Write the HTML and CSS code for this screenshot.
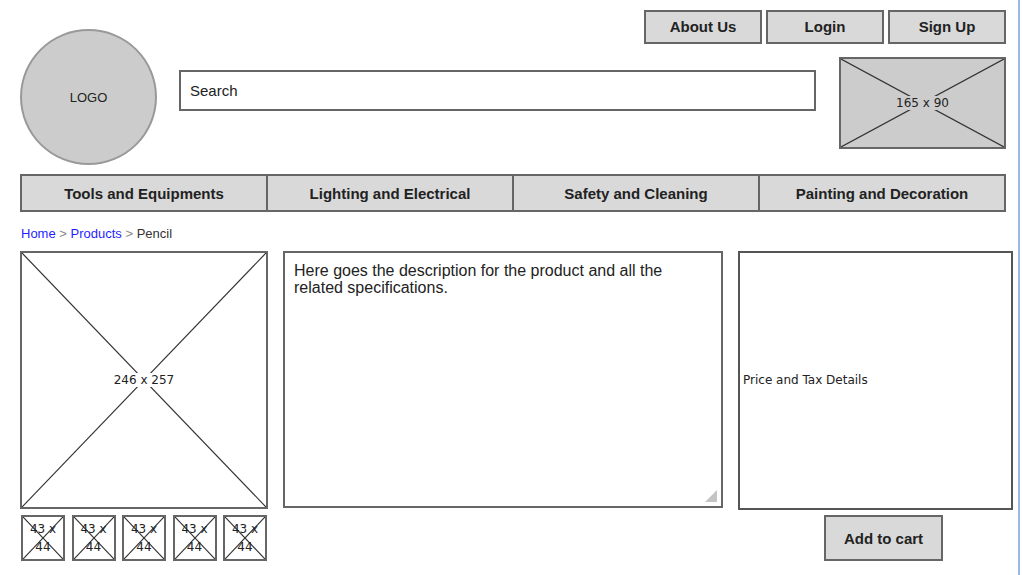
FILE: index.html
```html
<!DOCTYPE html>
<html lang="en">
<head>
  <meta charset="UTF-8">
  <title>Product - Pencil</title>
  <link rel="stylesheet" href="styles.css">
</head>
<body>
  <div class="page">
    <header class="header">
      <div class="logo">LOGO</div>
      <nav class="toplinks">
        <a href="#">About Us</a>
        <a href="#">Login</a>
        <a href="#">Sign Up</a>
      </nav>
      <div class="search">Search</div>
      <div class="ph banner">
        <svg viewBox="0 0 100 100" preserveAspectRatio="none"><line x1="0" y1="0" x2="100" y2="100"/><line x1="100" y1="0" x2="0" y2="100"/></svg>
        <span>165 x 90</span>
      </div>
    </header>

    <div class="menu">
      <a href="#">Tools and Equipments</a>
      <a href="#">Lighting and Electrical</a>
      <a href="#">Safety and Cleaning</a>
      <a href="#">Painting and Decoration</a>
    </div>

    <div class="crumbs">
      <a href="#">Home</a> <span class="sep">&gt;</span> <a href="#">Products</a> <span class="sep">&gt;</span> <span class="here">Pencil</span>
    </div>

    <section class="product">
      <div class="ph photo">
        <svg viewBox="0 0 100 100" preserveAspectRatio="none"><line x1="0" y1="0" x2="100" y2="100"/><line x1="100" y1="0" x2="0" y2="100"/></svg>
        <span>246 x 257</span>
      </div>
      <div class="desc">
        <p>Here goes the description for the product and all the related specifications.</p>
        <i class="grip"></i>
      </div>
      <div class="price">Price and Tax Details</div>

      <div class="thumbs">
        <div class="ph thumb"><svg viewBox="0 0 100 100" preserveAspectRatio="none"><line x1="0" y1="0" x2="100" y2="100"/><line x1="100" y1="0" x2="0" y2="100"/></svg><span>43 x 44</span></div>
        <div class="ph thumb"><svg viewBox="0 0 100 100" preserveAspectRatio="none"><line x1="0" y1="0" x2="100" y2="100"/><line x1="100" y1="0" x2="0" y2="100"/></svg><span>43 x 44</span></div>
        <div class="ph thumb"><svg viewBox="0 0 100 100" preserveAspectRatio="none"><line x1="0" y1="0" x2="100" y2="100"/><line x1="100" y1="0" x2="0" y2="100"/></svg><span>43 x 44</span></div>
        <div class="ph thumb"><svg viewBox="0 0 100 100" preserveAspectRatio="none"><line x1="0" y1="0" x2="100" y2="100"/><line x1="100" y1="0" x2="0" y2="100"/></svg><span>43 x 44</span></div>
        <div class="ph thumb"><svg viewBox="0 0 100 100" preserveAspectRatio="none"><line x1="0" y1="0" x2="100" y2="100"/><line x1="100" y1="0" x2="0" y2="100"/></svg><span>43 x 44</span></div>
      </div>
      <button class="cart">Add to cart</button>
    </section>
  </div>
</body>
</html>
```

FILE: styles.css
```css
* { box-sizing: border-box; margin: 0; padding: 0; }
body {
  font-family: 'Liberation Sans', Arial, sans-serif;
  background: #fff;
  color: #222;
}
.page {
  width: 1020px;
  min-height: 100vh;
  padding: 10px 0 0 20px;
  border-right: 2px solid #9ab9e2;
}
a { text-decoration: none; color: inherit; }

/* header */
.header {
  display: grid;
  width: 986px;
  grid-template-columns: 137px 637px 1fr;
  grid-template-rows: 34px auto;
  column-gap: 22px;
}
.logo {
  grid-column: 1;
  grid-row: 1 / 3;
  margin-top: 19px;
  width: 137px;
  height: 136px;
  border-radius: 50%;
  background: #cccccc;
  border: 2px solid #999;
  display: flex;
  align-items: center;
  justify-content: center;
  font-size: 13px;
  color: #222;
}
.toplinks {
  grid-column: 2 / 4;
  grid-row: 1;
  display: flex;
  justify-content: flex-end;
  gap: 4px;
}
.toplinks a,
.cart {
  width: 118px;
  height: 34px;
  border: 2px solid #666;
  background: #d9d9d9;
  display: flex;
  align-items: center;
  justify-content: center;
  font-weight: bold;
  font-size: 15px;
  color: #222;
}
.toplinks a { padding-bottom: 2px; }
.search {
  grid-column: 2;
  grid-row: 2;
  margin-top: 26px;
  height: 41px;
  border: 2px solid #666;
  padding-left: 9px;
  display: flex;
  align-items: center;
  font-size: 15px;
  color: #222;
}

/* image placeholders */
.ph {
  position: relative;
  border: 2px solid #666;
  display: flex;
  align-items: center;
  justify-content: center;
  font-family: 'DejaVu Sans', sans-serif;
  font-size: 12px;
  color: #222;
}
.ph svg {
  position: absolute;
  top: 0; left: 0;
  width: 100%;
  height: 100%;
}
.ph line { stroke: #333; stroke-width: 1.2; vector-effect: non-scaling-stroke; }
.ph span { position: relative; padding: 0 2px; background: #fff; }
.banner {
  grid-column: 3;
  grid-row: 2;
  margin-left: 1px;
  margin-top: 13px;
  height: 92px;
  background: #cccccc;
}
.banner span { background: #cccccc; }

/* category menu */
.menu {
  display: flex;
  width: 986px;
  height: 38px;
  margin-top: 9px;
  border: 2px solid #666;
  background: #d9d9d9;
}
.menu a {
  flex: 1;
  display: flex;
  align-items: center;
  justify-content: center;
  font-weight: bold;
  font-size: 15px;
  color: #222;
}
.menu a + a { border-left: 2px solid #666; }

.crumbs {
  margin: 14px 0 9px 1px;
  font-size: 13px;
  line-height: 16px;
}
.crumbs a { color: #1f1fff; }
.crumbs .sep { color: #888; }
.crumbs .here { color: #333; }

/* product area */
.product {
  display: grid;
  grid-template-columns: 248px 440px 275px;
  grid-template-rows: 259px auto;
  column-gap: 15px;
  row-gap: 5px;
  align-items: start;
}
.photo { height: 258px; }
.desc {
  position: relative;
  height: 257px;
  border: 2px solid #666;
  padding: 9px 9px;
  font-size: 16px;
  line-height: 17px;
  color: #222;
}
.desc p { max-width: 390px; }
.grip {
  position: absolute;
  right: 4px;
  bottom: 4px;
  width: 0;
  height: 0;
  border-left: 12px solid transparent;
  border-bottom: 12px solid #c4c4c4;
}
.price {
  height: 259px;
  border: 2px solid #555;
  display: flex;
  align-items: center;
  padding: 0 0 2px 3px;
  font-family: 'DejaVu Sans', sans-serif;
  font-size: 12px;
  color: #222;
}
.thumbs {
  display: flex;
  gap: 6.5px;
  margin-left: 1px;
}
.thumb {
  width: 44px;
  height: 46px;
  font-size: 12px;
  line-height: 18px;
  text-align: center;
}
.thumb span { background: none; padding: 0 4px; }
.cart {
  grid-column: 3;
  margin-left: 86px;
  width: 119px;
  height: 46px;
  font-family: 'Liberation Sans', Arial, sans-serif;
  cursor: pointer;
}
```
